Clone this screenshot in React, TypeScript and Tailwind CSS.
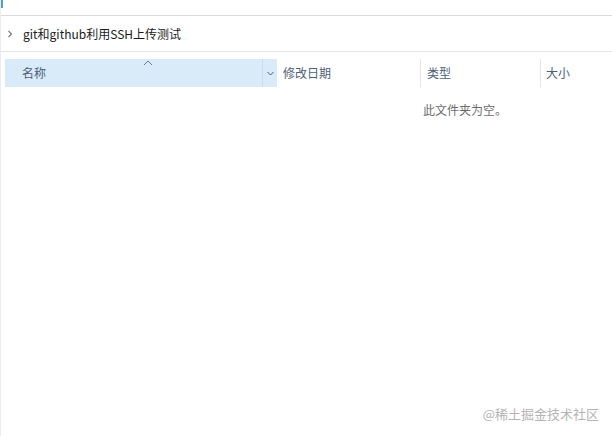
export default function App() {
  const font = { fontFamily: '"Noto Sans CJK SC", "Noto Sans", sans-serif' };
  return (
    <div
      className="relative w-[612px] h-[436px] bg-white overflow-hidden border-l border-[#ececec]"
      style={font}
    >
      {/* tiny blue mark top-left */}
      <div className="absolute left-0 top-0 w-[2px] h-[8px] bg-[#5b9bd5]" />

      {/* top spacer */}
      <div className="h-[16px] border-b border-[#dcdcdc]" />

      {/* breadcrumb */}
      <div className="h-[36px] flex items-center border-b border-[#e5e5e5]">
        <svg className="ml-[6px] w-[6px] h-[8px]" viewBox="0 0 6 8" fill="none">
          <path d="M1.5 1l3 3-3 3" stroke="#7a7a7a" strokeWidth="1.2" />
        </svg>
        <span className="ml-[10px] text-[12px] text-[#1a1a1a] leading-none">
          git和github利用SSH上传测试
        </span>
      </div>

      {/* column header */}
      <div className="mt-[7px] flex h-[28px] text-[12px] text-[#4c607a]">
        <div className="relative ml-[4px] w-[272px] flex bg-[#d9ebf9]">
          <div className="flex-1 flex items-center pl-[17px]">名称</div>
          <svg
            className="absolute left-[138px] top-[1px] w-[10px] h-[6px]"
            viewBox="0 0 10 6"
            fill="none"
          >
            <path d="M1 5l4-4 4 4" stroke="#6a7d95" strokeWidth="1" />
          </svg>
          <div className="w-[15px] flex items-center justify-center border-l border-[#c6dcef]">
            <svg className="w-[7px] h-[5px]" viewBox="0 0 7 5" fill="none">
              <path d="M0.5 1l3 3 3-3" stroke="#4c607a" strokeWidth="1" />
            </svg>
          </div>
        </div>
        <div className="w-[144px] flex items-center pl-[6px] border-r border-[#e5e5e5]">
          修改日期
        </div>
        <div className="w-[120px] flex items-center pl-[6px] border-r border-[#e5e5e5]">
          类型
        </div>
        <div className="flex-1 flex items-center pl-[5px]">大小</div>
      </div>

      {/* empty message */}
      <div className="mt-[14px] pl-[422px] text-[12px] text-[#6d6d6d]">此文件夹为空。</div>

      {/* watermark */}
      <div className="absolute right-[13px] top-[404px] text-[13px] text-[#b4b4b4]">
        @稀土掘金技术社区
      </div>
    </div>
  );
}
